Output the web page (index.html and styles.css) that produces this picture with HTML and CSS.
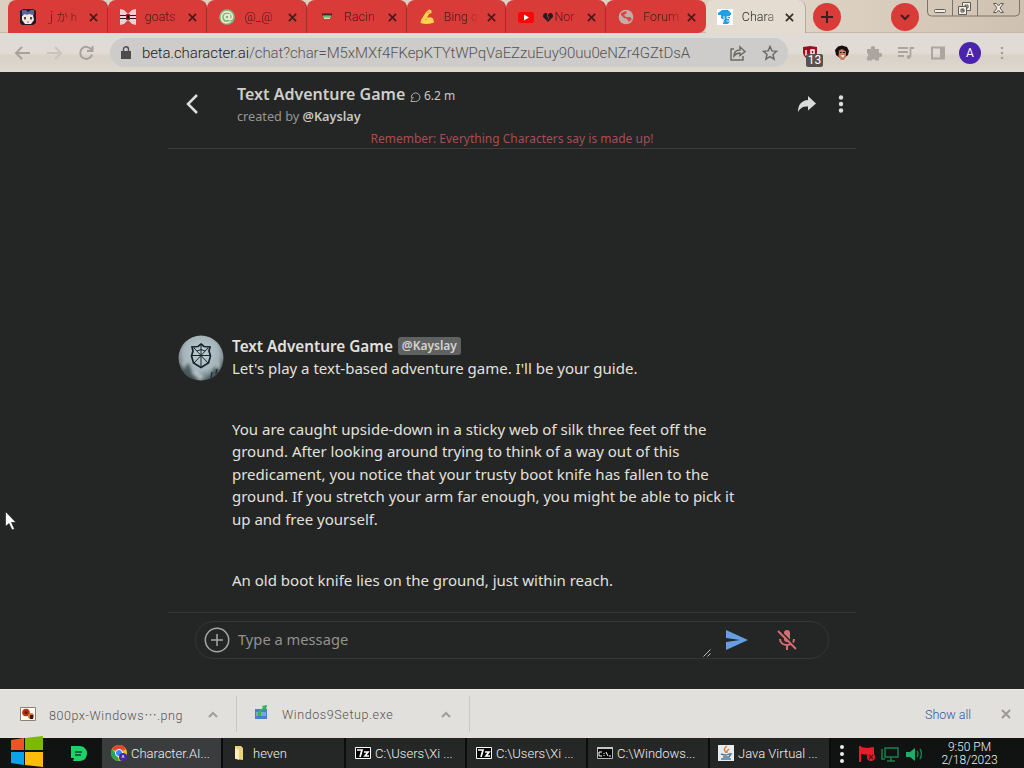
FILE: index.html
```html
<!DOCTYPE html>
<html lang="en">
<head>
<meta charset="utf-8">
<title>Character.AI</title>
<link rel="stylesheet" href="styles.css">
</head>
<body>
<header class="tabstrip">
  <div class="tabs">
    <div class="tab"><svg class="fav" viewBox="0 0 16 16"><path fill="#201927" d="M0 2l3-2h10l3 2v12l-3 2H2l-2-2z"/><path fill="#62609a" d="M2 1h4l2 2 3-2h3v5H2z"/><path fill="#f2e7df" d="M2 7l3-2 2 1 2-1 4 1 1 5-3 4H5l-3-4z"/><path d="M5 8v2.500M11 8v2.500" stroke="#292331" stroke-width="1.600"/><path d="M7 13h2" stroke="#b45b54"/></svg><span class="name jp">ｊか h</span><svg class="x" viewBox="0 0 10 10"><path d="M1 1l8 8M9 1L1 9"/></svg></div>
    <div class="tab"><svg class="fav" viewBox="0 0 16 16"><path fill="#f8ccd2" d="M0 0l4 1 4 4 4-4 4-1v16l-4-1-4-4-4 4-4 1z"/><path stroke="#251d24" stroke-width="1.200" d="M0 6.500h16M0 9.500h16"/><path fill="#a8202c" d="M6 5h4v6H6z"/><path fill="#251d24" d="M7 6h2v4H7z"/></svg><span class="name">goats</span><svg class="x" viewBox="0 0 10 10"><path d="M1 1l8 8M9 1L1 9"/></svg></div>
    <div class="tab"><svg class="fav" viewBox="0 0 16 16"><circle cx="8" cy="8" r="7.800" fill="#7dbd7f"/><circle cx="8" cy="8" r="2.300" fill="none" stroke="#f2efdc" stroke-width="1.600"/><path d="M10.500 5v4.500c0 2 3 1 3-1.500 0-7-11-7-11 0s6 6.500 9 4.200" fill="none" stroke="#f2efdc" stroke-width="1.400"/></svg><span class="name">@_@</span><svg class="x" viewBox="0 0 10 10"><path d="M1 1l8 8M9 1L1 9"/></svg></div>
    <div class="tab"><svg class="fav" viewBox="0 0 16 16"><path fill="#442329" d="M3 4.500h10v2H3z"/><path fill="#52c978" d="M4 6.500h8v2H4z"/><path fill="#efd4ae" d="M5 8.500h6V10H5z"/></svg><span class="name">Racin</span><svg class="x" viewBox="0 0 10 10"><path d="M1 1l8 8M9 1L1 9"/></svg></div>
    <div class="tab"><svg class="fav" viewBox="0 0 16 16"><path fill="#ffd34a" d="M7 3l3-2.500 2.500 1V4L10 5 8 9c2-1 4-1 6 .5l1 4c-3 1.500-9 2-13.500.5L2 11z"/><path fill="none" stroke="#df8f2e" stroke-width=".8" d="M8 3.500l3-.5M6 10l2 1"/></svg><span class="name">Bing&nbsp;<i>c</i></span><svg class="x" viewBox="0 0 10 10"><path d="M1 1l8 8M9 1L1 9"/></svg></div>
    <div class="tab"><svg class="fav" viewBox="0 0 16 16"><rect y="3" width="16" height="11" rx="2.500" fill="#fb0606"/><path fill="#fff" d="M6 5.500l5 3-5 3z"/></svg><span class="name"><svg class="heart" viewBox="0 0 12 11"><path fill="#231c20" d="M6 11L0 5V2l2-2h2l2 2 2-2h2l2 2v3z"/><path fill="none" stroke="#d93b39" d="M6 1l-1 3 2 1-1 3"/></svg>Nor</span><svg class="x" viewBox="0 0 10 10"><path d="M1 1l8 8M9 1L1 9"/></svg></div>
    <div class="tab"><svg class="fav" viewBox="0 0 16 16"><circle cx="8" cy="8" r="7.300" fill="#c3adab"/><path fill="#d84a48" d="M3 4l5-2 1 2-3 2 2 2h4l2 2-3 3-2-3-3-1-3-3z"/></svg><span class="name">Forum</span><svg class="x" viewBox="0 0 10 10"><path d="M1 1l8 8M9 1L1 9"/></svg></div>
    <div class="tab active"><svg class="fav" viewBox="0 0 16 16"><path fill="#fff" d="M0 0h16v16H0z"/><path fill="#269be9" d="M1 4l4-3h6l3 3v2H1zM4 6h9v6l-2 3H6l1-4-3-2z"/><path stroke="#e8f5ff" fill="none" d="M7 7v4M13 7.500h-3v2h2.500v2.500h-3"/></svg><span class="name">Chara</span><svg class="x" viewBox="0 0 10 10"><path d="M1 1l8 8M9 1L1 9"/></svg></div>
  </div>
  <div class="round plus"><svg viewBox="0 0 28 28"><path d="M14 8v12M8 14h12"/></svg></div>
  <div class="round down"><svg viewBox="0 0 28 28"><path d="M10 12l4 4 4-4"/></svg></div>
  <svg class="winctl" viewBox="0 0 94 17"><path d="M.5 0v12q0 4 4 4h84q4 0 4-4V0M25.500 0v16M50.500 0v16" fill="none" stroke="#79736b"/><g fill="#f3eee4" stroke="#615d58"><rect x="7.500" y="9.500" width="11" height="3" rx="1"/><path fill-rule="evenodd" d="M35.500 2.500h8v8h-8zM38 5h3v3h-3z"/><path fill-rule="evenodd" d="M31.500 6.500h8v8h-8zM34 9h3v3h-3z"/><path d="M66.500 3.500h3l2 2.500 2-2.500h3l-3.500 4.500 3.500 4.500h-3l-2-2.500-2 2.500h-3l3.500-4.500z"/></g></svg>
</header>
<nav class="toolbar">
  <svg class="navs" viewBox="0 0 100 24" fill="none" stroke-width="2"><path stroke="#a6a19b" d="M30 12H16M22 6l-6 6 6 6"/><path stroke="#c9c4bd" d="M47 12h14M55 6l6 6-6 6"/><path stroke="#a6a19b" d="M91.500 9A6 6 0 1 0 92 13.500M92.500 5v5h-5.500"/></svg>
  <div class="omnibox">
    <svg class="lock" viewBox="0 0 10 13"><path fill="#4c4c4c" d="M0 5h10v8H0z"/><path d="M2.500 5V3.200a2.500 2.500 0 0 1 5 0V5" fill="none" stroke="#4c4c4c" stroke-width="1.400"/></svg>
    <span class="url"><b>beta.character.ai</b>/chat?char=M5xMXf4FKepKTYtWPqVaEZzuEuy90uu0eNZr4GZtDsA</span>
    <svg class="share" viewBox="0 0 16 16"><path d="M4 4H1v11h12v-4M4 11c0-4 2-6 6-6V2l5 4.500-5 4V8C7 8 5.500 9 4 11z"/></svg>
    <svg class="star" viewBox="0 0 16 16"><path d="M8 1.500l1.900 4.400 4.700.4-3.600 3.100 1.100 4.700L8 11.600l-4.100 2.500L5 9.400 1.400 6.300l4.700-.4z"/></svg>
  </div>
  <div class="ublock"><svg viewBox="0 0 16 16"><path fill="#9c0f1d" d="M1 2l7-1 7 1v6q-1 5-7 7-6-2-7-7z"/><path fill="none" stroke="#fff" stroke-width="1.400" d="M4 5v5h4M9 5h3v4H9z"/></svg><span class="badge">13</span></div>
  <svg class="ext face" viewBox="0 0 16 16"><path fill="#16100e" d="M4 1.500l4-1 5 1.500 2 4-1 4-4 3H6l-4-3-1-5z"/><path fill="#c47d5c" d="M5 5.500l3-1.500 4 2.500v4.500L10 15H7l-2.500-4z"/><path fill="#fff" d="M6.500 10.500l4-.5-1.500 2.500z"/><path stroke="#241716" d="M6 7.500h1.500M9 7.500h2"/></svg>
  <svg class="ext puzzle" viewBox="0 0 16 16"><path fill="#aaa59d" d="M1 4h4a2.200 2.200 0 1 1 4 0h4v4a2.200 2.200 0 1 1 0 4v3.500H9.500a2.200 2.200 0 0 0-4 0H1V12a2.200 2.200 0 0 0 0-4z"/></svg>
  <svg class="ext media" viewBox="0 0 16 16"><path fill="none" stroke="#aaa59d" stroke-width="1.800" d="M0 3h10M0 7h10M0 11h6M12.500 12V3H16"/><circle cx="10.700" cy="12" r="2" fill="#aaa59d"/></svg>
  <svg class="ext panel" viewBox="0 0 16 16"><path fill="none" stroke="#aaa59d" stroke-width="2" d="M2 2.500h12v11H2z"/><path fill="#aaa59d" d="M10 2h4v12h-4z"/></svg>
  <div class="profile">A</div>
  <svg class="kebab" viewBox="0 0 4 16" fill="#a39e96"><circle cx="2" cy="3" r="1.300"/><circle cx="2" cy="8" r="1.300"/><circle cx="2" cy="13" r="1.300"/></svg>
</nav>
<main class="chat">
  <section class="chat-head">
    <svg class="back" viewBox="0 0 14 22"><path d="M12 2L3 11l9 9"/></svg>
    <div class="heading">
      <div class="title"><strong>Text Adventure Game</strong><svg class="bubble" viewBox="0 0 12 12"><path d="M2 9L1 11.500h5a4.700 4.700 0 1 0-4.500-4M2 9q0-2 2-2"/></svg><span>6.2 m</span></div>
      <div class="by">created by <b>@Kayslay</b></div>
    </div>
    <svg class="forward" viewBox="0 0 20 18"><path d="M11 1l8 7.500-8 7v-4C6 11 3 13 1 17 1 9 5 5.500 11 5z"/></svg>
    <svg class="more" viewBox="0 0 6 18"><circle cx="3" cy="2.500" r="2.200"/><circle cx="3" cy="9" r="2.200"/><circle cx="3" cy="15.500" r="2.200"/></svg>
  </section>
  <p class="remember">Remember: Everything Characters say is made up!</p>
  <section class="message">
    <svg class="avatar" viewBox="0 0 46 46"><defs><radialGradient id="sky" cx=".5" cy=".4" r=".65"><stop offset="0" stop-color="#c2cfd3"/><stop offset=".58" stop-color="#a4b4ba"/><stop offset="1" stop-color="#435155"/></radialGradient><clipPath id="disc"><circle cx="23" cy="23" r="22.500"/></clipPath><filter id="mist"><feGaussianBlur stdDeviation="1.500"/></filter></defs><g clip-path="url(#disc)"><path fill="url(#sky)" d="M0 0h46v46H0z"/><g filter="url(#mist)"><path fill="#3e5052" opacity=".8" d="M0 31l5-6 3 5 3-2 3 10 7 3 5 5H0zM46 25l-3 2-2 8-4-3-5 9-4 5h18z"/><path fill="#c8d3d1" opacity=".75" d="M3 28l3-3 2 4-2 5zM14 38l4-3 8 7-4 4zM38 29l4-3-1 9z"/></g><path stroke="#263237" stroke-width="1.500" d="M33 43l1-6M38 39l1-5"/></g><g fill="none" stroke="#14242c"><path stroke-width="1.700" d="M23 9l3 2.500 6 .5-1 4 1.500 5-2 7-7.500 4.500-7.500-4.500-2-7 1.500-5-1-4 6-.5z"/><path stroke-width="1" d="M23 9v24M14 20.500h18M16 13l14 15M30 13L16 28M19 16l4-1.500 4 1.500"/></g></svg>
    <div class="body">
      <div class="author"><strong>Text Adventure Game</strong><span class="tag">@Kayslay</span></div>
      <p>Let's play a text-based adventure game. I'll be your guide.</p>
      <p>You are caught upside-down in a sticky web of silk three feet off the<br>ground. After looking around trying to think of a way out of this<br>predicament, you notice that your trusty boot knife has fallen to the<br>ground. If you stretch your arm far enough, you might be able to pick it<br>up and free yourself.</p>
      <p>An old boot knife lies on the ground, just within reach.</p>
    </div>
  </section>
  <footer class="compose">
    <div class="field">
      <svg class="add" viewBox="0 0 26 26"><circle cx="13" cy="13" r="11.700"/><path d="M13 7v12M7 13h12"/></svg>
      <span class="placeholder">Type a message</span>
      <svg class="grip" viewBox="0 0 8 8"><path d="M.5 7.500l7-7M4.500 7.500l3-3"/></svg>
      <svg class="send" viewBox="0 0 24 20"><path fill="#659fe2" d="M1 0l22 10L1 20v-8l14-2L1 8z"/></svg>
      <svg class="mic" viewBox="0 0 20 22"><path fill="#d96c75" d="M7 4a3 3 0 0 1 6 0v6a3 3 0 0 1-6 0z"/><path fill="none" stroke="#d96c75" stroke-width="2" d="M3 10c0 8 14 8 14 0M10 16v5"/><path stroke="#242525" stroke-width="2" d="M2 1l18 18"/><path stroke="#d96c75" stroke-width="2" d="M1 2l18 18"/></svg>
    </div>
  </footer>
</main>
<section class="downloads">
  <div class="dl first"><svg class="file" viewBox="0 0 16 14"><path fill="#fffdf4" stroke="#8a8179" d="M.5.500h15v13H.5z"/><circle cx="6" cy="5.500" r="3.800" fill="#b93512"/><circle cx="6" cy="5.500" r="1.500" fill="#5c1b0c"/><circle cx="11" cy="9" r="3" fill="#d87a20"/><path fill="#3b1710" d="M10 8h3v4h-3z"/></svg><span class="png">800px-Windows<span class="dots">⋯</span>.png</span><svg class="up" viewBox="0 0 10 7"><path d="M1 6l4-4 4 4"/></svg></div>
  <div class="dl second"><svg class="file exe" viewBox="0 0 16 16"><path fill="#4980c7" d="M2 5h12v10H2z"/><path fill="#78a8d9" d="M3 8h10v4H3z"/><path fill="#2fb65a" d="M5 12q-1-6 5-8L9 2l5-1-1 5-2-1q-4 2-3 7z"/></svg><span class="setup">Windos9Setup.exe</span><svg class="up" viewBox="0 0 10 7"><path d="M1 6l4-4 4 4"/></svg></div>
  <span class="showall">Show all</span>
  <svg class="close" viewBox="0 0 10 10"><path d="M1 1l8 8M9 1L1 9"/></svg>
</section>
<footer class="taskbar">
  <div class="start"><svg viewBox="0 0 34 32"><path fill="#f05322" d="M1 4l13-2v12H1z"/><path fill="#7db900" d="M15 2l18-2v14H15z"/><path fill="#0ba4ea" d="M1 16h13v13L1 27z"/><path fill="#ffbd08" d="M15 16h18v15l-18-2z"/></svg></div>
  <svg class="green" viewBox="0 0 16 15"><path fill="#1bd267" d="M0 0h9q7 1 7 7.500T9 15H2l1-3H0z"/><path stroke="#11442a" stroke-width="1.500" d="M4 6h7M4 9h6"/></svg>
  <div class="task current"><svg viewBox="0 0 16 16"><circle cx="8" cy="8" r="8" fill="#f2bd24"/><path fill="#e64435" d="M1 4a8 8 0 0 1 14 0L8 8z"/><path fill="#28a35a" d="M1 4l5 6 2 6A8 8 0 0 1 1 4z"/><circle cx="8" cy="8" r="3.600" fill="#4285f4" stroke="#fff"/><circle cx="12" cy="12" r="4" fill="#4328a9"/><path stroke="#ddd" fill="none" stroke-width=".8" d="M11 13l1-3 1 3"/></svg><span>Character.AI...</span></div>
  <div class="task t-heven"><svg viewBox="0 0 16 16"><path fill="#ead37c" d="M4 1h6l2 2v12l-8-1z"/><path fill="#fff0ae" d="M4 3l4 2v10l-4-2z"/></svg><span>heven</span></div>
  <div class="task t-z"><svg viewBox="0 0 16 16"><path fill="#050505" stroke="#fff" d="M.5 2.500h15v11H.5z"/><path fill="none" stroke="#fff" stroke-width="1.700" d="M2 5h5l-2 7M9 7h4l-3 4h4"/></svg><span>C:\Users\Xi ...</span></div>
  <div class="task t-z"><svg viewBox="0 0 16 16"><path fill="#050505" stroke="#fff" d="M.5 2.500h15v11H.5z"/><path fill="none" stroke="#fff" stroke-width="1.700" d="M2 5h5l-2 7M9 7h4l-3 4h4"/></svg><span>C:\Users\Xi ...</span></div>
  <div class="task t-cmd"><svg viewBox="0 0 16 16"><path fill="#080808" stroke="#b8b8b8" d="M.5 2.500h15v11H.5z"/><path stroke="#c5c5c5" stroke-width="2" d="M0 3h16"/><path fill="none" stroke="#fff" d="M5 7H2v4h3M7 8v1M7 10v1M9 7l2 4M12 11h2"/></svg><span>C:\Windows...</span></div>
  <div class="task t-java"><svg viewBox="0 0 16 16"><path fill="#e6edf2" d="M0 0h16v16H0z"/><path fill="none" stroke="#e28337" stroke-width="1.500" d="M9 1q-4 3-2 5l1 2M11 4L9 6v2"/><path fill="none" stroke="#527694" stroke-width="1.500" d="M3 9q5 2 8 0h2l-2 3H5M3 14h10"/></svg><span>Java Virtual ...</span></div>
  <div class="tray"><svg viewBox="0 0 84 24"><g fill="#eee"><circle cx="4" cy="5" r="2"/><circle cx="4" cy="12" r="2"/><circle cx="4" cy="19" r="2"/></g><path fill="#e71c2b" d="M21 4h2v16h-2zM23 5l6 1 7-1v8h-5l-8-1z"/><circle cx="33" cy="15" r="4" fill="#e71c2b"/><path stroke="#641019" stroke-width="1.500" d="M31 13l4 4M35 13l-4 4"/><g fill="none" stroke="#16804e" stroke-width="1.500"><path d="M47 6h13v9H47zM53 15v4M49 19h8M44 7v10h3"/><path d="M79 9q2 3 0 6M82 7q3 5 0 10"/></g><path fill="#20ad69" d="M68 10h4l5-4v13l-5-4h-4z"/></svg></div>
  <div class="clock"><span>9:50 PM</span><span>2/18/2023</span></div>
</footer>
<svg class="cursor" viewBox="0 0 12 20"><path fill="#fff" stroke="#111" stroke-width=".6" d="M.5.500v15l3.500-3 3 6.500 2.500-1-3-6.500H11z"/></svg>
</body>
</html>
```

FILE: styles.css
```css
* { box-sizing: border-box; }
body { margin: 0; width: 1024px; height: 768px; overflow: hidden; position: relative; background: #242525; font-family: Roboto, "Noto Sans CJK JP", sans-serif; display: flex; flex-direction: column; }
svg { display: block; flex: none; }
p { margin: 0; }
span, b, strong { white-space: nowrap; }

.tabstrip { height: 33px; flex: none; display: flex; padding-left: 8px; background: linear-gradient(90deg, #dccfc0, #ded3c5 78%, #cfc1b0); border-bottom: 1px solid #c5b7ab; }
.tabs { display: flex; height: 33px; }
.tab { width: 99.700px; height: 33px; display: flex; align-items: center; padding: 1px 0 0 12px; background: #d93b39; border-radius: 8px 8px 0 0; border-right: 1px solid #a92d2c; color: #421b1b; }
.tab:nth-child(7) { border-right: 0; border-radius: 8px 8px 8px 0; }
.tab.active { background: #e4dcd0; color: #302c29; border-right: 1px solid #b2a99c; }
.fav { width: 16px; height: 16px; margin-right: 9px; }
.name { width: 37px; height: 20px; line-height: 20px; font-size: 12.500px; font-weight: 300; display: flex; align-items: center; -webkit-mask-image: linear-gradient(90deg, #000 65%, rgba(0,0,0,.3)); mask-image: linear-gradient(90deg, #000 65%, rgba(0,0,0,.3)); }
.name i { font-style: normal; opacity: .5; }
.jp { font-size: 11.500px; }
.heart { width: 10px; height: 9px; margin-right: 1px; }
.x { width: 9px; height: 9px; margin-left: 6.500px; }
.x path { fill: none; stroke: #451e1d; stroke-width: 2; }
.active .fav { margin-left: -1px; }
.active .x path { stroke: #37332f; }
.round { width: 28px; height: 28px; margin-top: 3px; border-radius: 50%; background: #d93b39; flex: none; }
.round path { fill: none; stroke: #3c2020; stroke-width: 2; }
.plus { margin-left: 7px; }
.down { margin-left: 50px; }
.winctl { width: 94px; height: 17px; margin-left: 8px; }

.toolbar { height: 39px; flex: none; display: flex; align-items: center; background: linear-gradient(#e0dcd5 0 20px, #d8d1c7 23px, #ded8ce); }
.navs { width: 100px; height: 24px; }
.omnibox { height: 29px; width: 678px; margin-left: 10px; border-radius: 15px; background: #cdccca; display: flex; align-items: center; padding: 0 10px 0 11px; }
.lock { width: 10px; height: 13px; }
.url { width: 549px; flex: none; margin: 0 39px 0 11px; font-size: 15px; font-weight: 300; color: #555; letter-spacing: -.11px; }
.url b { font-weight: 300; color: #1f2020; }
.share, .star { width: 16px; height: 16px; }
.share path, .star path { fill: none; stroke: #6d6b68; stroke-width: 1.500; }
.star { margin-left: 16px; }
.ublock { width: 16px; height: 16px; margin-left: 14px; position: relative; }
.ublock svg { width: 16px; height: 16px; }
.badge { position: absolute; left: 4px; top: 9px; width: 17px; height: 13px; line-height: 13px; font-size: 12px; text-align: center; color: #fff; background: #55534f; border-radius: 2px; }
.ext { width: 16px; height: 16px; margin-left: 16px; }
.profile { width: 22px; height: 22px; margin-left: 13px; border-radius: 50%; background: #4a24ae; color: #fff; font-size: 12px; line-height: 22px; text-align: center; }
.kebab { width: 4px; height: 16px; margin-left: 19px; }

.chat { height: 617px; flex: none; padding: 0 168px; display: flex; flex-direction: column; background: #242525; color: #e3e1dc; font-family: "Noto Sans", sans-serif; }
.chat-head { display: flex; height: 58px; padding: 11px 11px 0 17px; }
.back { width: 14px; height: 22px; margin-top: 10px; }
.back path { fill: none; stroke: #ddd; stroke-width: 2.500; }
.heading { width: 560px; margin-left: 38px; }
.title { display: flex; align-items: center; height: 22px; font-size: 12px; }
.title strong { width: 168px; font-size: 16px; font-weight: 600; color: #cfcecb; }
.title .bubble { width: 11px; height: 11px; margin: 4px 3px 0 5px; }
.bubble path { fill: none; stroke: #bbb; }
.title span { margin-top: 2px; color: #c8c7c3; }
.by { height: 22px; line-height: 22px; font-size: 12.700px; color: #979792; }
.by b { font-weight: 600; color: #c7c5c1; }
.forward { width: 20px; height: 18px; margin-top: 12px; fill: #dadada; }
.more { width: 6px; height: 18px; margin: 11.500px 0 0 20.500px; fill: #ddd; }
.remember { width: 688px; height: 19px; line-height: 18px; text-align: center; font-size: 12px; color: #a64e56; border-bottom: 1px solid #3b3d3d; }
.message { display: flex; padding: 185px 0 0 10px; }
.avatar { width: 46px; height: 46px; margin-top: .5px; }
.body { margin-left: 8px; font-size: 15px; line-height: 22.500px; }
.author { height: 23px; display: flex; align-items: center; padding-top: 1px; }
.author strong { font-size: 15.300px; font-weight: 600; }
.tag { width: 63px; height: 18px; line-height: 17px; margin-left: 5px; text-align: center; border-radius: 3px; background: #606161; font-size: 12px; font-weight: 600; color: #d5d2cd; }
.body p + p { margin-top: 38.300px; }
.compose { width: 688px; margin-top: auto; height: 77px; padding: 8px 27px 0; border-top: 1px solid #343737; }
.field { height: 38px; border: 1px solid #343737; border-radius: 19px; display: flex; align-items: center; padding-left: 7.500px; }
.add { width: 26px; height: 26px; }
.add circle, .add path { fill: none; stroke: #a8a7a3; stroke-width: 1.500; }
.placeholder { width: 465px; margin: -2px 0 0 8.500px; font-size: 14.700px; color: #94928d; }
.grip { width: 8px; height: 8px; margin-top: 26px; }
.grip path { stroke: #bbb; }
.send { width: 24px; height: 20px; margin-left: 14px; }
.mic { width: 20px; height: 22px; margin-left: 28px; }

.downloads { height: 49px; flex: none; display: flex; align-items: center; background: #e1e0dc; border-top: 1px solid #ecebe5; color: #555; font-weight: 300; font-size: 12.500px; }
.dl { display: flex; align-items: center; height: 36px; border-right: 1px solid #c9c8c3; }
.first { width: 237px; padding-left: 20px; }
.second { width: 233px; padding-left: 16px; }
.file { width: 16px; height: 14px; }
.exe { height: 16px; margin-top: -4px; }
.png { width: 146px; margin-left: 13px; letter-spacing: .55px; }
.dots { display: inline-block; width: 13px; text-align: center; letter-spacing: 0; }
.setup { width: 146px; margin-left: 13px; letter-spacing: .6px; }
.up { width: 10px; height: 7px; margin-left: 13px; }
.up path { fill: none; stroke: #a19e99; stroke-width: 2; }
.showall { margin-left: 455px; width: 55px; color: #3655a0; }
.close { width: 10px; height: 10px; margin-left: 21px; }
.close path { stroke: #9c9994; stroke-width: 2; }

.taskbar { height: 30px; flex: none; display: flex; background: #111212; color: #f0f0f0; font-size: 13px; font-weight: 300; }
.start { width: 71px; padding-left: 10px; }
.start svg { width: 34px; height: 32px; margin-top: -2px; }
.green { width: 16px; height: 15px; margin-top: 8px; }
.task { display: flex; align-items: center; background: #252626; border-right: 2px solid #0b0c0c; padding-left: 9px; }
.task svg { width: 16px; height: 16px; margin-right: 4px; }
.current { width: 121px; margin-left: 15px; background: #3b3c3d; }
.t-heven { width: 123px; padding-left: 8px; }
.t-heven svg { margin-right: 6px; }
.t-z { width: 121px; }
.t-cmd { width: 122px; padding-left: 9px; }
.t-java { width: 121px; padding-left: 8px; }
.tray { width: 84px; padding-top: 4px; margin-left: 7px; }
.tray svg { width: 84px; height: 24px; }
.clock { width: 87px; margin-left: 4px; display: flex; flex-direction: column; align-items: center; padding-top: 3px; font-size: 12px; line-height: 13px; }
.cursor { position: absolute; left: 5px; top: 511px; width: 12px; height: 20px; }
```
